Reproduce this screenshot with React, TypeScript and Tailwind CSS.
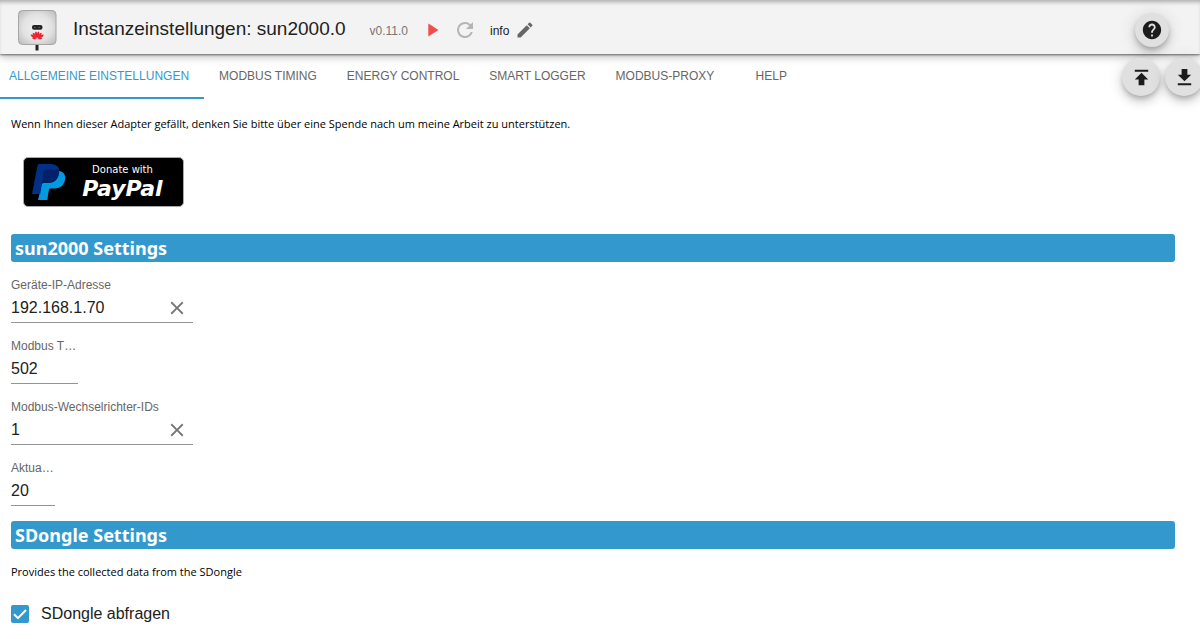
import { useState } from "react";

const PATHS = {
  play: "M8 5v14l11-7z",
  refresh:
    "M17.65 6.35A7.96 7.96 0 0 0 12 4a8 8 0 1 0 7.73 10h-2.08A6 6 0 1 1 12 6c1.66 0 3.14.69 4.22 1.78L13 11h7V4z",
  edit: "M3 17.25V21h3.75L17.81 9.94l-3.75-3.75zM20.71 7.04a1 1 0 0 0 0-1.41l-2.34-2.34a1 1 0 0 0-1.41 0l-1.83 1.83 3.75 3.75z",
  help: "M12 2C6.48 2 2 6.48 2 12s4.48 10 10 10 10-4.48 10-10S17.52 2 12 2zm1 17h-2v-2h2zm2.07-7.75-.9.92C13.45 12.9 13 13.5 13 15h-2v-.5c0-1.1.45-2.1 1.17-2.83l1.24-1.26c.37-.36.59-.86.59-1.41 0-1.1-.9-2-2-2s-2 .9-2 2H8c0-2.21 1.79-4 4-4s4 1.79 4 4c0 .88-.36 1.68-.93 2.25z",
  upload: "M5 4v2h14V4zm0 10h4v6h6v-6h4l-7-7z",
  download: "M19 9h-4V3H9v6H5l7 7zM5 18v2h14v-2z",
  close:
    "M19 6.41 17.59 5 12 10.59 6.41 5 5 6.41 10.59 12 5 17.59 6.41 19 12 13.41 17.59 19 19 17.59 13.41 12z",
};

function Icon({ name, className }: { name: keyof typeof PATHS; className: string }) {
  return (
    <svg viewBox="0 0 24 24" fill="currentColor" aria-hidden="true" className={className}>
      <path d={PATHS[name]} />
    </svg>
  );
}

const PETALS = [-80, -55, -33, -11, 11, 33, 55, 80];

function AdapterLogo() {
  return (
    <svg viewBox="0 0 40 42" className="h-[42px] w-10 shrink-0" aria-hidden="true">
      <defs>
        <radialGradient id="case" cx="0.5" cy="0.5" r="0.7">
          <stop offset="0" stopColor="#f2f2f2" />
          <stop offset="0.55" stopColor="#e2e2e2" />
          <stop offset="1" stopColor="#b8b8b8" />
        </radialGradient>
      </defs>
      <rect x="18.500" y="34" width="3" height="7.500" fill="#222" />
      <rect x="1.500" y="1.500" width="37.500" height="34" rx="4" fill="url(#case)" stroke="#a6a6a6" />
      <rect x="15" y="16" width="10.500" height="4.800" rx="2" fill="#242424" />
      <path d="M17 18.400h1.500M21.500 18.400H23" stroke="#777" strokeWidth="0.800" />
      <g fill="#ee1f2e" transform="translate(20.200 30.200)">
        {PETALS.map((angle) => (
          <path
            key={angle}
            d={
              Math.abs(angle) > 70
                ? "M0-.8C-1.200-2.500-1-4.600 0-5 1-4.600 1.200-2.500 0-.8z"
                : "M0-.8C-1.500-4-1.500-7 0-7.800 1.500-7 1.500-4 0-.8z"
            }
            transform={`rotate(${angle})`}
          />
        ))}
      </g>
    </svg>
  );
}

function PayPalMark() {
  return (
    <svg viewBox="0 0 34 36" className="h-9 w-[34px] shrink-0" aria-hidden="true">
      <path
        d="M13 7h14.500c4.500 1 6.500 4.500 5.500 9-1.200 6-5.500 8.500-11.500 8.500h-3.200c-.8 0-1.200.4-1.400 1.200L15.300 36H6z"
        fill="#009cde"
      />
      <path
        d="M5.500 1.500C5.700.500 6.300 0 7.200 0H19c6 0 9 3.500 8 9.500-1.100 6.500-5.200 9.500-11.500 9.500h-4c-1 0-1.600.500-1.800 1.500L8.200 30H0z"
        fill="#003087"
      />
      <path
        d="M11.500 7.300c.2-1.200.9-1.800 2-1.800h9c1.800 0 3.300.3 4.600.9.100 1 .1 2-.1 3.100-1.100 6.500-5.200 9.500-11.500 9.500h-4c-.8 0-1.400.3-1.700 1z"
        fill="#012169"
      />
    </svg>
  );
}

const TABS = [
  "ALLGEMEINE EINSTELLUNGEN",
  "MODBUS TIMING",
  "ENERGY CONTROL",
  "SMART LOGGER",
  "MODBUS-PROXY",
  "HELP",
];

const FAB =
  "flex items-center justify-center rounded-full bg-[#e0e0e0] text-[#1c1c1c] shadow-[0_3px_5px_-1px_rgba(0,0,0,0.2),0_6px_10px_rgba(0,0,0,0.14),0_1px_18px_rgba(0,0,0,0.12)]";

const NOTE = "font-['Open_Sans','Noto_Sans',sans-serif] text-[11px] leading-4 text-black";

type FieldProps = { id: string; label: string; initial: string; width: string; clearable?: boolean };

function Field({ id, label, initial, width, clearable }: FieldProps) {
  const [value, setValue] = useState(initial);
  return (
    <div className={`flex flex-col border-b border-[#949494] ${width}`}>
      <label htmlFor={id} className="text-xs leading-[14px] whitespace-nowrap text-[#666]">
        {label}
      </label>
      <div className="flex h-[30px] items-center pt-0.5">
        <input
          id={id}
          value={value}
          onChange={(e) => setValue(e.target.value)}
          className="w-full min-w-0 flex-1 bg-transparent text-base leading-5 text-[#212121] outline-none"
        />
        {clearable && (
          <button type="button" aria-label="Löschen" onClick={() => setValue("")} className="mr-[5px] text-[#757575]">
            <Icon name="close" className="size-[22px]" />
          </button>
        )}
      </div>
    </div>
  );
}

function SectionBar({ title }: { title: string }) {
  return (
    <h2 className="rounded-[3px] bg-[#3399cc] px-1 font-['Noto_Sans',sans-serif] text-lg leading-7 font-bold text-white">
      {title}
    </h2>
  );
}

export default function App() {
  const [active, setActive] = useState(0);
  const [query, setQuery] = useState(true);
  return (
    <div className="relative min-h-screen overflow-x-clip bg-white font-['Liberation_Sans',Arial,sans-serif] text-[#212121]">
      <header className="relative flex h-[54px] items-center bg-[#f3f3f3] pt-1.5 pr-[31px] pl-[17px] shadow-[inset_0_4px_4px_-2px_rgba(0,0,0,0.3),0_1px_2px_rgba(0,0,0,0.5),0_3px_8px_rgba(0,0,0,0.25)]">
        <div className="flex flex-1 items-center">
          <AdapterLogo />
          <div className="ml-4 flex items-baseline pb-0.5">
            <h1 className="text-[19px] leading-7">Instanzeinstellungen: sun2000.0</h1>
            <span className="ml-6 text-xs text-[#757575]">v0.11.0</span>
          </div>
          <button type="button" aria-label="Start" className="ml-[13px] text-[#f44b4b]">
            <Icon name="play" className="size-[22px]" />
          </button>
          <button type="button" aria-label="Neu laden" className="ml-2.5 text-[#b5b5b5]">
            <Icon name="refresh" className="size-6" />
          </button>
          <span className="ml-[13px] pt-0.5 text-xs">info</span>
          <button type="button" aria-label="Bearbeiten" className="ml-1.5 text-[#666]">
            <Icon name="edit" className="size-5" />
          </button>
        </div>
        <button type="button" aria-label="Hilfe" className={`size-[34px] ${FAB}`}>
          <Icon name="help" className="size-[22px]" />
        </button>
      </header>

      <nav className="flex h-[45px]" role="tablist">
        {TABS.map((tab, i) => (
          <button
            key={tab}
            type="button"
            role="tab"
            aria-selected={active === i}
            onClick={() => setActive(i)}
            className={`min-w-[84px] border-b-2 px-[15px] text-xs first:pl-[9px] ${
              active === i ? "border-[#3399cc] text-[#3399cc]" : "border-transparent text-[#666]"
            }`}
          >
            {tab}
          </button>
        ))}
      </nav>

      <div className="absolute top-[58px] -right-[3px] flex gap-[5px]">
        <button type="button" aria-label="Hochladen" className={`size-[38px] ${FAB}`}>
          <Icon name="upload" className="size-[23px]" />
        </button>
        <button type="button" aria-label="Herunterladen" className={`size-[38px] ${FAB}`}>
          <Icon name="download" className="size-[23px]" />
        </button>
      </div>

      <main className="pt-[17px] pr-[25px] pl-[11px]">
        <p className={NOTE}>
          Wenn Ihnen dieser Adapter gefällt, denken Sie bitte über eine Spende nach um meine Arbeit zu unterstützen.
        </p>
        <a
          href="#paypal"
          className="mt-[25px] mb-[27px] ml-3 flex h-[50px] w-[161px] items-center rounded-[5px] border border-[#aaa] bg-black pl-2 font-['DejaVu_Sans',sans-serif] text-white"
        >
          <PayPalMark />
          <span className="flex flex-1 flex-col items-center pr-1">
            <span className="text-[10px] leading-[14px]">Donate with</span>
            <span className="text-[22px] leading-6 font-bold italic">PayPal</span>
          </span>
        </a>

        <SectionBar title="sun2000 Settings" />
        <div className="mt-4 mb-[15px] flex flex-col gap-4">
          <Field id="ip" label="Geräte-IP-Adresse" initial="192.168.1.70" width="w-[182px]" clearable />
          <Field id="port" label="Modbus T…" initial="502" width="w-[67px]" />
          <Field id="ids" label="Modbus-Wechselrichter-IDs" initial="1" width="w-[182px]" clearable />
          <Field id="interval" label="Aktua…" initial="20" width="w-[44px]" />
        </div>

        <SectionBar title="SDongle Settings" />
        <p className={`mt-[15px] ${NOTE}`}>Provides the collected data from the SDongle</p>
        <label className="mt-6 flex w-fit items-center gap-3 text-base leading-5">
          <span className="grid size-[18px] place-items-center">
            <input
              type="checkbox"
              checked={query}
              onChange={(e) => setQuery(e.target.checked)}
              className="col-start-1 row-start-1 size-[18px] appearance-none rounded-[2px] border-2 border-[#757575] checked:border-[#3399cc] checked:bg-[#3399cc]"
            />
            {query && (
              <svg viewBox="0 0 18 18" className="pointer-events-none col-start-1 row-start-1 size-[18px]" aria-hidden="true">
                <path d="M3 9.300 7 13.200 15 5" fill="none" stroke="#fff" strokeWidth="2" />
              </svg>
            )}
          </span>
          SDongle abfragen
        </label>
      </main>
    </div>
  );
}
